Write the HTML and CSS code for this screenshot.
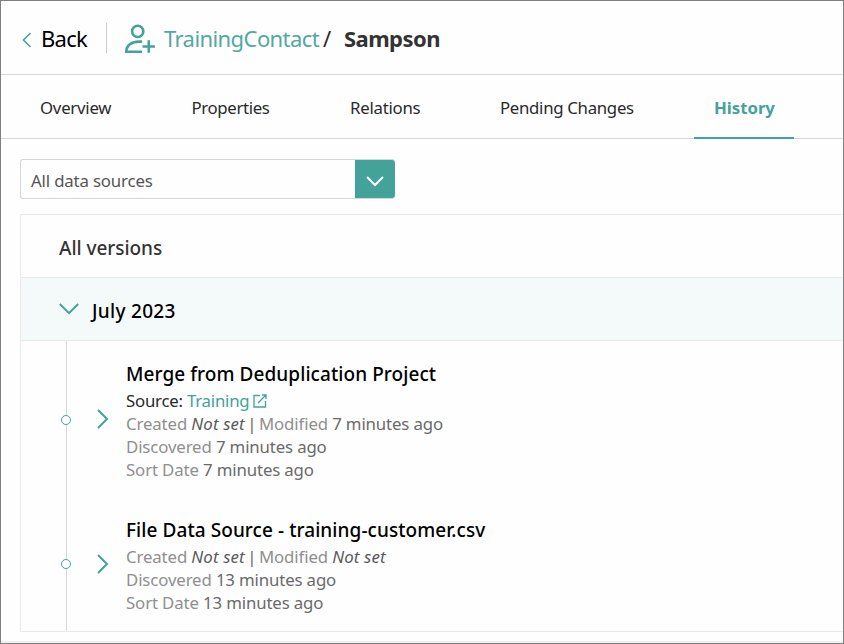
FILE: index.html
```html
<!DOCTYPE html>
<html lang="en">
<head>
<meta charset="utf-8">
<title>TrainingContact / Sampson</title>
<link rel="stylesheet" href="styles.css">
</head>
<body>
<div class="app">
  <header class="header">
    <a class="back"><svg class="back-icon" width="10" height="16" viewBox="0 0 10 16"><path d="M8.5 1 1.500 8l7 7"/></svg><span>Back</span></a>
    <span class="divider"></span>
    <svg class="contact-icon" width="30" height="30" viewBox="0 0 30 30"><circle cx="12.700" cy="7.400" r="5.600"/><path d="M17 17.600H14C7 17.600 1.300 21 1.300 27.700H17"/><path d="M17.500 22.500H30M23.800 16.300V28.800"/></svg>
    <a class="entity">TrainingContact</a>
    <span class="slash">/</span>
    <h1 class="name">Sampson</h1>
  </header>
  <nav class="tabs">
    <a class="tab">Overview</a>
    <a class="tab tab-properties">Properties</a>
    <a class="tab">Relations</a>
    <a class="tab tab-pending">Pending Changes</a>
    <a class="tab active">History</a>
  </nav>
  <main class="main">
    <div class="select">
      <span class="select-value">All data sources</span>
      <span class="select-button"><svg width="18" height="11" viewBox="0 0 18 11"><path d="m1 1 8 8 8-8"/></svg></span>
    </div>
    <section class="panel">
      <h2 class="panel-title">All versions</h2>
      <div class="month"><svg width="20" height="12" viewBox="0 0 20 12"><path d="m.8 1 9.200 9.200L19.200 1"/></svg><h3>July 2023</h3></div>
      <div class="timeline">
        <article class="entry">
          <div class="rail"><span class="dot"></span></div>
          <svg class="chevron" width="12" height="20" viewBox="0 0 12 20"><path d="m1 1 9 9-9 9"/></svg>
          <div class="details">
            <h4 class="title">Merge from Deduplication Project</h4>
            <p class="source">Source: <a>Training<svg width="14" height="14" viewBox="0 0 14 14"><path d="M7 1.500H1v11.500h11.500V7M9 1h4v4M13 1 5 9"/></svg></a></p>
            <p>Created <em>Not set</em><b class="pipe"> | </b>Modified <b>7 minutes ago</b></p>
            <p>Discovered <b>7 minutes ago</b></p>
            <p>Sort Date <b>7 minutes ago</b></p>
          </div>
        </article>
        <article class="entry">
          <div class="rail"><span class="dot"></span></div>
          <svg class="chevron" width="12" height="20" viewBox="0 0 12 20"><path d="m1 1 9 9-9 9"/></svg>
          <div class="details">
            <h4 class="title">File Data Source - training-customer.csv</h4>
            <p>Created <em>Not set</em><b class="pipe"> | </b>Modified <em>Not set</em></p>
            <p>Discovered <b>13 minutes ago</b></p>
            <p>Sort Date <b>13 minutes ago</b></p>
          </div>
        </article>
      </div>
    </section>
  </main>
</div>
</body>
</html>
```
FILE: styles.css
```css
* { box-sizing: border-box; margin: 0; padding: 0; }
body {
  font: 400 16.8px/23px "Noto Sans", sans-serif;
  color: #2a2a2a;
  background: #fefefe;
}
svg { fill: none; stroke: #43a29a; stroke-width: 2; flex: none; }
.app {
  width: 844px;
  height: 644px;
  border: 1px solid #7f7f7f;
  overflow: hidden;
  box-shadow: inset 0 -2px #f1f1f1;
}
.header {
  display: flex;
  align-items: center;
  height: 74px;
  padding: 0 0 0 21px;
  border-bottom: 1px solid #d5d7d4;
  font-size: 22px;
  line-height: 30px;
}
.back { display: flex; align-items: center; color: #000; letter-spacing: -.7px; width: 84px; }
.back-icon { stroke-width: 1.6; margin: 5px 9px 0 0; }
.divider { width: 1px; height: 30px; background: #ccc; margin: 0 18px 0 0; }
.contact-icon { stroke-width: 2.600; margin-top: 3px; }
.entity { color: #54a8a1; margin-left: 9px; width: 159px; letter-spacing: -.58px; }
.slash { width: 21px; }
.name { font-size: 22px; font-weight: 700; color: #333; letter-spacing: -.55px; }
.tabs {
  display: grid;
  grid-template-columns: 152px 158px 150px 214px 100px;
  height: 64px;
  padding-left: 19px;
  border-bottom: 1px solid #d5d7d4;
  letter-spacing: -.25px;
}
.tab { padding: 21px 0 0 20px; height: 64px; }
.tab-properties { letter-spacing: -.35px; margin-left: -.500px; }
.tab-pending { letter-spacing: -.3px; }
.active { color: #43a29a; font-weight: 700; border-bottom: 2px solid #43a29a; letter-spacing: -.03px; }
.main { padding: 20px 0 0 19px; }
.select {
  display: flex;
  width: 375px;
  height: 40px;
  border: 1px solid #d5d7d4;
  border-right: 0;
  border-radius: 3px;
}
.select-value { flex: 1; padding: 9px 0 0 10px; color: #555; letter-spacing: -.15px; }
.select-button {
  display: grid;
  place-items: center;
  width: 40px;
  background: #43a29a;
  border-radius: 0 3px 3px 0;
}
.select-button svg { stroke: #fff; margin-top: 5px; }
.panel {
  margin-top: 15px;
  border: 1px solid #e8eae8;
  border-right: 0;
}
.panel-title, .month, .title { font-size: 19px; font-weight: 550; }
.panel-title { height: 62px; padding-left: 38px; line-height: 66px; color: #333; letter-spacing: -.05px; }
.month {
  display: flex;
  align-items: center;
  gap: 13px;
  height: 64px;
  padding-left: 38px;
  border: solid #e8eae8;
  border-width: 1px 0;
  background: #f4faf9;
  color: #000;
}
.month h3 { font-size: 19px; font-weight: 550; line-height: 26px; padding-top: 4px; letter-spacing: .3px; }
.month svg { margin-bottom: 1px; }
.timeline { color: #8f8f8f; }
.entry { display: grid; grid-template-columns: 76px 29px 1fr; align-items: center; height: 133px; }
.entry:first-child { height: 157px; }
.rail {
  display: grid;
  place-items: center start;
  align-self: stretch;
  padding-left: 40px;
  background: linear-gradient(#d5d7d4, #d5d7d4) 45px 0 / 1px 100% no-repeat;
}
.entry + .entry .rail { padding-bottom: 1px; }
.dot { width: 10px; height: 10px; border: 1.500px solid #43a29a; border-radius: 50%; background: #fefefe; }
.chevron { margin-bottom: 2px; }
.title { line-height: 30px; color: #000; letter-spacing: .07px; }
.source svg { stroke-width: 1.300; margin-left: 4px; vertical-align: -1px; }
p { white-space: nowrap; letter-spacing: -.12px; }
.source { color: #2a2a2a; letter-spacing: -.22px; }
.source a { color: #43a29a; }
b { font-weight: 400; color: #6a6a6a; letter-spacing: -.14px; }
.pipe { word-spacing: -1.700px; }
em { color: #5a5a5a; letter-spacing: .15px; }
```
